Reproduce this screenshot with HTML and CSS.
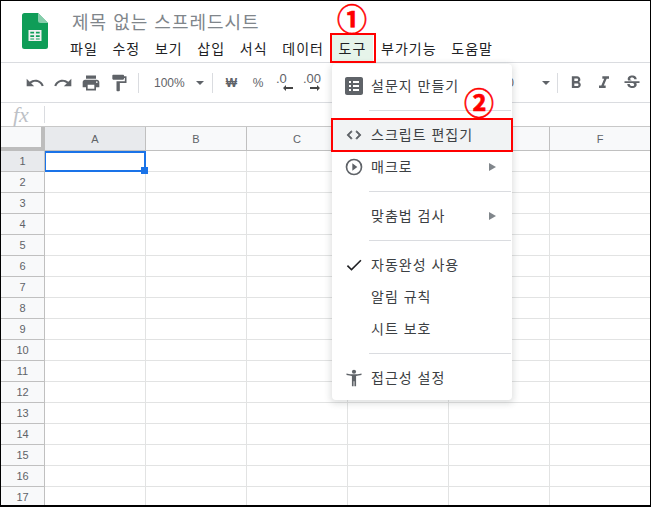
FILE: index.html
```html
<!DOCTYPE html>
<html lang="ko">
<head>
<meta charset="utf-8">
<title>제목 없는 스프레드시트</title>
<link rel="stylesheet" href="styles.css">
</head>
<body>
<div class="frame">
  <header class="appbar">
    <svg class="logo" viewBox="0 0 26 36" width="26" height="36"><path d="M2.5 0H16l10 10v23.5a2.5 2.5 0 0 1-2.5 2.5h-21A2.5 2.5 0 0 1 0 33.500V2.500A2.500 2.500 0 0 1 2.500 0z" fill="#0f9d58"/><path d="M16 0l10 10h-7.500A2.500 2.500 0 0 1 16 7.500z" fill="#87ceac"/><path d="M6.500 17h13v11h-13zM8.300 18.800v1.800h3.800v-1.800zm5.600 0v1.800h3.800v-1.800zm-5.600 3.400v1.800h3.800v-1.800zm5.600 0v1.800h3.800v-1.800zm-5.600 3.300v1h3.800v-1zm5.600 0v1h3.800v-1z" fill="#f1f1f1" fill-rule="evenodd"/></svg>
    <div class="titles">
      <div class="doc-title">제목 없는 스프레드시트</div>
      <nav class="menubar">
        <span class="mi">파일</span><span class="mi">수정</span><span class="mi">보기</span><span class="mi">삽입</span><span class="mi">서식</span><span class="mi">데이터</span><span class="mi active">도구</span><span class="mi">부가기능</span><span class="mi">도움말</span>
      </nav>
    </div>
  </header>
  <div class="toolbar">
    <svg class="ti" viewBox="0 0 24 24"><path d="M12.500 8c-2.650 0-5.050.99-6.900 2.600L2 7v9h9l-3.620-3.620c1.390-1.160 3.160-1.880 5.120-1.880 3.540 0 6.550 2.310 7.600 5.500l2.370-.78C21.080 11.030 17.150 8 12.500 8z"/></svg>
    <svg class="ti" viewBox="0 0 24 24"><path d="M18.400 10.600C16.550 8.990 14.150 8 11.500 8c-4.650 0-8.580 3.030-9.960 7.220L3.900 16c1.050-3.190 4.050-5.500 7.600-5.500 1.950 0 3.730.72 5.120 1.880L13 16h9V7l-3.600 3.600z"/></svg>
    <svg class="ti" viewBox="0 0 24 24"><path d="M19 8H5c-1.660 0-3 1.340-3 3v6h4v4h12v-4h4v-6c0-1.660-1.340-3-3-3zm-3 11H8v-5h8v5zm3-7c-.55 0-1-.45-1-1s.45-1 1-1 1 .45 1 1-.45 1-1 1zm-1-9H6v4h12V3z"/></svg>
    <svg class="ti" viewBox="0 0 24 24"><path d="M18 4V3c0-.55-.45-1-1-1H5c-.55 0-1 .45-1 1v4c0 .55.45 1 1 1h12c.55 0 1-.45 1-1V6h1v4H9v11c0 .55.45 1 1 1h2c.55 0 1-.45 1-1v-9h8V4h-3z"/></svg>
    <span class="tsep first"></span>
    <span class="zoom">100%</span>
    <span class="caret"></span>
    <span class="tsep second"></span>
    <span class="tt won">₩</span>
    <span class="tt pct">%</span>
    <span class="dec">.0<svg viewBox="0 0 10 6" width="10" height="6"><path d="M0 3l3-3v2h7v2H3v2z"/></svg></span>
    <span class="dec">.00<svg viewBox="0 0 10 6" width="10" height="6"><path d="M10 3L7 0v2H0v2h7v2z"/></svg></span>
    <span class="fontsize">10</span>
    <span class="caret"></span>
    <span class="tsep third"></span>
    <svg class="ti" viewBox="0 0 24 24"><path d="M15.600 10.790c.97-.67 1.650-1.770 1.650-2.790 0-2.260-1.750-4-4-4H7v14h7.040c2.090 0 3.710-1.700 3.710-3.790 0-1.520-.86-2.820-2.150-3.420zM10 6.500h3c.83 0 1.500.67 1.500 1.500s-.67 1.500-1.500 1.500h-3v-3zm3.500 9H10v-3h3.500c.83 0 1.500.67 1.500 1.500s-.67 1.500-1.500 1.500z"/></svg>
    <svg class="ti" viewBox="0 0 24 24"><path d="M10 4v3h2.210l-3.420 8H6v3h8v-3h-2.210l3.420-8H18V4z"/></svg>
    <svg class="ti" viewBox="0 0 24 24"><path d="M7.240 8.750c-.26-.48-.39-1.030-.39-1.670 0-.61.13-1.160.4-1.670.26-.5.63-.93 1.110-1.290.48-.35 1.050-.63 1.700-.83.66-.19 1.390-.29 2.180-.29.81 0 1.540.11 2.210.34.66.22 1.230.54 1.690.94.47.4.83.88 1.080 1.430.25.55.38 1.150.38 1.810h-3.010c0-.31-.05-.59-.15-.85-.09-.27-.24-.49-.44-.68-.2-.19-.45-.33-.75-.44-.3-.1-.66-.16-1.060-.16-.39 0-.74.04-1.030.13-.29.09-.53.21-.72.36-.19.16-.34.34-.44.55-.1.21-.15.43-.15.66 0 .48.25.88.74 1.210.38.25.77.48 1.410.7H7.390c-.05-.08-.11-.17-.15-.25zM21 12v-2H3v2h9.620c.18.07.4.14.55.2.37.17.66.34.87.51.21.17.35.36.43.57.07.2.11.43.11.69 0 .23-.05.45-.14.66-.09.2-.23.38-.42.53-.19.15-.42.26-.71.35-.29.08-.63.13-1.010.13-.43 0-.83-.04-1.180-.13s-.66-.23-.91-.42c-.25-.19-.45-.44-.59-.75-.14-.31-.25-.76-.25-1.210H6.400c0 .55.08 1.130.24 1.580.16.45.37.85.65 1.210.28.35.6.66.98.92.37.26.78.48 1.220.65.44.17.9.3 1.380.39.48.08.96.13 1.440.13.8 0 1.530-.09 2.180-.28s1.210-.45 1.670-.79c.46-.34.82-.77 1.070-1.270s.38-1.070.38-1.710c0-.6-.1-1.140-.31-1.610-.05-.11-.11-.23-.17-.33H21z"/></svg>
  </div>
  <div class="formula">
    <span class="fx">fx</span><span class="fx-sep"></span>
  </div>
  <div class="sheet">
    <div class="row head"><div class="corner"></div><div class="ch on">A</div><div class="ch">B</div><div class="ch">C</div><div class="ch">D</div><div class="ch">E</div><div class="ch">F</div></div>
    <div class="row first-row"><div class="rh on">1</div><div class="c sel"><span class="handle"></span></div><div class="c"></div><div class="c"></div><div class="c"></div><div class="c"></div><div class="c"></div></div>
    <div class="row"><div class="rh">2</div><div class="c"></div><div class="c"></div><div class="c"></div><div class="c"></div><div class="c"></div><div class="c"></div></div>
    <div class="row"><div class="rh">3</div><div class="c"></div><div class="c"></div><div class="c"></div><div class="c"></div><div class="c"></div><div class="c"></div></div>
    <div class="row"><div class="rh">4</div><div class="c"></div><div class="c"></div><div class="c"></div><div class="c"></div><div class="c"></div><div class="c"></div></div>
    <div class="row"><div class="rh">5</div><div class="c"></div><div class="c"></div><div class="c"></div><div class="c"></div><div class="c"></div><div class="c"></div></div>
    <div class="row"><div class="rh">6</div><div class="c"></div><div class="c"></div><div class="c"></div><div class="c"></div><div class="c"></div><div class="c"></div></div>
    <div class="row"><div class="rh">7</div><div class="c"></div><div class="c"></div><div class="c"></div><div class="c"></div><div class="c"></div><div class="c"></div></div>
    <div class="row"><div class="rh">8</div><div class="c"></div><div class="c"></div><div class="c"></div><div class="c"></div><div class="c"></div><div class="c"></div></div>
    <div class="row"><div class="rh">9</div><div class="c"></div><div class="c"></div><div class="c"></div><div class="c"></div><div class="c"></div><div class="c"></div></div>
    <div class="row"><div class="rh">10</div><div class="c"></div><div class="c"></div><div class="c"></div><div class="c"></div><div class="c"></div><div class="c"></div></div>
    <div class="row"><div class="rh">11</div><div class="c"></div><div class="c"></div><div class="c"></div><div class="c"></div><div class="c"></div><div class="c"></div></div>
    <div class="row"><div class="rh">12</div><div class="c"></div><div class="c"></div><div class="c"></div><div class="c"></div><div class="c"></div><div class="c"></div></div>
    <div class="row"><div class="rh">13</div><div class="c"></div><div class="c"></div><div class="c"></div><div class="c"></div><div class="c"></div><div class="c"></div></div>
    <div class="row"><div class="rh">14</div><div class="c"></div><div class="c"></div><div class="c"></div><div class="c"></div><div class="c"></div><div class="c"></div></div>
    <div class="row"><div class="rh">15</div><div class="c"></div><div class="c"></div><div class="c"></div><div class="c"></div><div class="c"></div><div class="c"></div></div>
    <div class="row"><div class="rh">16</div><div class="c"></div><div class="c"></div><div class="c"></div><div class="c"></div><div class="c"></div><div class="c"></div></div>
    <div class="row"><div class="rh">17</div><div class="c"></div><div class="c"></div><div class="c"></div><div class="c"></div><div class="c"></div><div class="c"></div></div>
  </div>

  <div class="menu">
    <div class="item"><svg class="mic big" viewBox="0 0 24 24"><path d="M19 3H5c-1.100 0-2 .9-2 2v14c0 1.100.9 2 2 2h14c1.100 0 2-.9 2-2V5c0-1.100-.9-2-2-2zM9 17H7v-2h2v2zm0-4H7v-2h2v2zm0-4H7V7h2v2zm8 8h-6v-2h6v2zm0-4h-6v-2h6v2zm0-4h-6V7h6v2z"/></svg><span class="lbl">설문지 만들기</span></div>
    <div class="msep"></div>
    <div class="item hot"><svg class="mic" viewBox="0 0 24 24"><path d="M9.400 16.600L4.800 12l4.600-4.600L8 6l-6 6 6 6 1.400-1.400zm5.200 0l4.600-4.600-4.600-4.600L16 6l6 6-6 6-1.400-1.400z" transform="translate(1.800 1.800) scale(.85)" stroke="#5f6368" stroke-width="1"/></svg><span class="lbl">스크립트 편집기</span></div>
    <div class="item"><svg class="mic" viewBox="0 0 24 24"><path d="M12 2a10 10 0 1 0 0 20 10 10 0 0 0 0-20zm0 18a8 8 0 1 1 0-16 8 8 0 0 1 0 16zm-2-3.500l6-4.500-6-4.500z"/></svg><span class="lbl">매크로</span><i class="sub"></i></div>
    <div class="msep"></div>
    <div class="item"><span class="mic"></span><span class="lbl">맞춤법 검사</span><i class="sub"></i></div>
    <div class="msep"></div>
    <div class="item"><svg class="mic check" viewBox="0 0 24 24"><path d="M9 16.200L4.800 12l-1.400 1.400L9 19 21 7l-1.400-1.400z"/></svg><span class="lbl">자동완성 사용</span></div>
    <div class="item"><span class="mic"></span><span class="lbl">알림 규칙</span></div>
    <div class="item"><span class="mic"></span><span class="lbl">시트 보호</span></div>
    <div class="msep"></div>
    <div class="item"><svg class="mic" viewBox="0 0 24 24"><circle cx="12" cy="4.500" r="2.500"/><path d="M21 8.500v-2c-2.800.7-5.900 1-9 1s-6.200-.3-9-1v2c2.300.6 4.800.9 6.500 1.100V22h2v-6h1v6h2V9.600c1.700-.2 4.200-.5 6.500-1.100z"/></svg><span class="lbl">접근성 설정</span></div>
  </div>

  <div class="callout box-tools"></div>
  <div class="callout box-script"></div>
  <span class="num n1">①</span>
  <span class="num n2">②</span>
</div>
</body>
</html>
```
FILE: styles.css
```css
* { box-sizing: border-box; }
html, body { margin: 0; padding: 0; background: #fff; }
body { font-family: "Noto Sans CJK KR", "Noto Sans", sans-serif; overflow: hidden; }
.frame {
  position: relative;
  width: 651px;
  height: 507px;
  border: solid #000;
  border-width: 1px 1px 2px 1px;
  overflow: hidden;
  background: #fff;
}
.appbar {
  display: flex;
  height: 62px;
  padding: 12px 0 0 21px;
  border-bottom: 1px solid #dadce0;
}
.logo { flex: none; }
.titles { margin-left: 22px; margin-top: -4px; }
.doc-title { font-size: 18px; line-height: 24px; color: #80868b; margin-left: 2px; letter-spacing: 1px; }
.menubar { display: flex; margin-top: 3px; }
.mi { font-size: 14px; line-height: 24px; color: #202124; margin-right: 14.700px; white-space: nowrap; letter-spacing: 1px; }
.mi.active { background: #e6f4ea; padding: 2px 7px; margin: -2px 7.700px -2px -7px; }
.toolbar {
  display: flex;
  align-items: center;
  height: 40px;
  padding-left: 24px;
  border-bottom: 1px solid #dadce0;
  color: #5f6368;
}
.ti { width: 20px; height: 20px; fill: #5f6368; margin-right: 8px; flex: none; }
.tsep { width: 1px; height: 20px; background: #dadce0; flex: none; }
.first { margin-left: 1px; }
.zoom { font: 12px "Liberation Sans", sans-serif; margin-left: 15px; color: #5f6368; }
.caret { width: 0; height: 0; border: 4px solid transparent; border-top: 4px solid #5f6368; border-bottom: 0; margin-left: 11px; flex: none; }
.second { margin-left: 8px; }
.tt { font: 12px "Liberation Sans", sans-serif; color: #5f6368; }
.won { font-weight: 700; margin-left: 13px; width: 28px; }
.pct { width: 24px; }
.dec { font: 13px/13px "Liberation Sans", sans-serif; width: 27px; height: 22px; color: #5f6368; flex: none; }
.dec svg { display: block; fill: #444; margin-left: 7px; }
.fontsize { flex: none; width: 201px; padding-right: 17px; text-align: right; font: 12px "Liberation Sans", sans-serif; color: #5f6368; }
.third { margin-left: 7px; margin-right: 8px; }
.formula { display: flex; align-items: center; height: 24px; border-bottom: 1px solid #c8c8c8; }
.fx { font: italic 22px "Liberation Serif", serif; color: #bdc1c6; margin-left: 12px; width: 31px; }
.fx-sep { width: 1px; height: 17px; background: #dadce0; }
.row { display: grid; grid-template-columns: 44px repeat(6, 101px); height: 21px; }
.row.head { height: 24px; }
.first-row { position: relative; z-index: 1; }
.corner { background: #f8f9fa; border: solid #bdbdbd; border-width: 0 4px 4px 0; }
.ch, .rh { font: 11px "Liberation Sans", sans-serif; color: #5f6368; display: flex; align-items: center; justify-content: center; }
.ch { background: #f8f9fa; border: solid #c0c0c0; border-width: 0 1px 1px 0; }
.rh { background: #f8f9fa; border: solid #c0c0c0; border-width: 0 1px 1px 0; }
.ch.on, .rh.on { background: #e8eaed; }
.c { border: solid #e2e3e3; border-width: 0 1px 1px 0; position: relative; }
.sel { border: 2px solid #1a73e8; border-left-width: 1px; z-index: 1; }
.handle { position: absolute; right: -4px; bottom: -4px; width: 7px; height: 7px; background: #1a73e8; }
.menu {
  position: absolute;
  z-index: 2;
  left: 331px;
  top: 63px;
  width: 180px;
  padding: 6px 0;
  background: #fff;
  border-radius: 4px;
  box-shadow: 0 2px 6px 2px rgba(60, 64, 67, .15);
}
.item { display: flex; align-items: center; height: 32px; font-size: 14px; color: #3c4043; }
.item.hot { background: #f1f3f4; }
.lbl { letter-spacing: 1px; margin-top: -3px; white-space: nowrap; }
.mic { width: 20px; height: 20px; margin: -1px 7px 0 12px; fill: #5f6368; flex: none; }
.mic.big { width: 24px; height: 24px; margin: -1px 5px 0 10px; }
.check { fill: #202124; }
.msep { height: 1px; margin: 8px 1px 8px 37px; background: #dadce0; }
.sub { width: 0; height: 0; margin-left: auto; margin-right: 16px; border: solid transparent; border-width: 4px 0 4px 7px; border-left-color: #80868b; }
.callout { position: absolute; z-index: 3; border: 2px solid #f00; }
.box-tools { left: 329px; top: 32px; width: 46px; height: 30px; }
.box-script { left: 330px; top: 117px; width: 182px; height: 34px; }
.num { position: absolute; z-index: 3; color: #f00; font-family: "Noto Sans CJK KR", sans-serif; font-weight: 700; font-size: 30px; line-height: 30px; -webkit-text-stroke: .5px #f00; }
.n1 { left: 336px; top: 1px; }
.n2 { left: 463px; top: 85px; }
```
